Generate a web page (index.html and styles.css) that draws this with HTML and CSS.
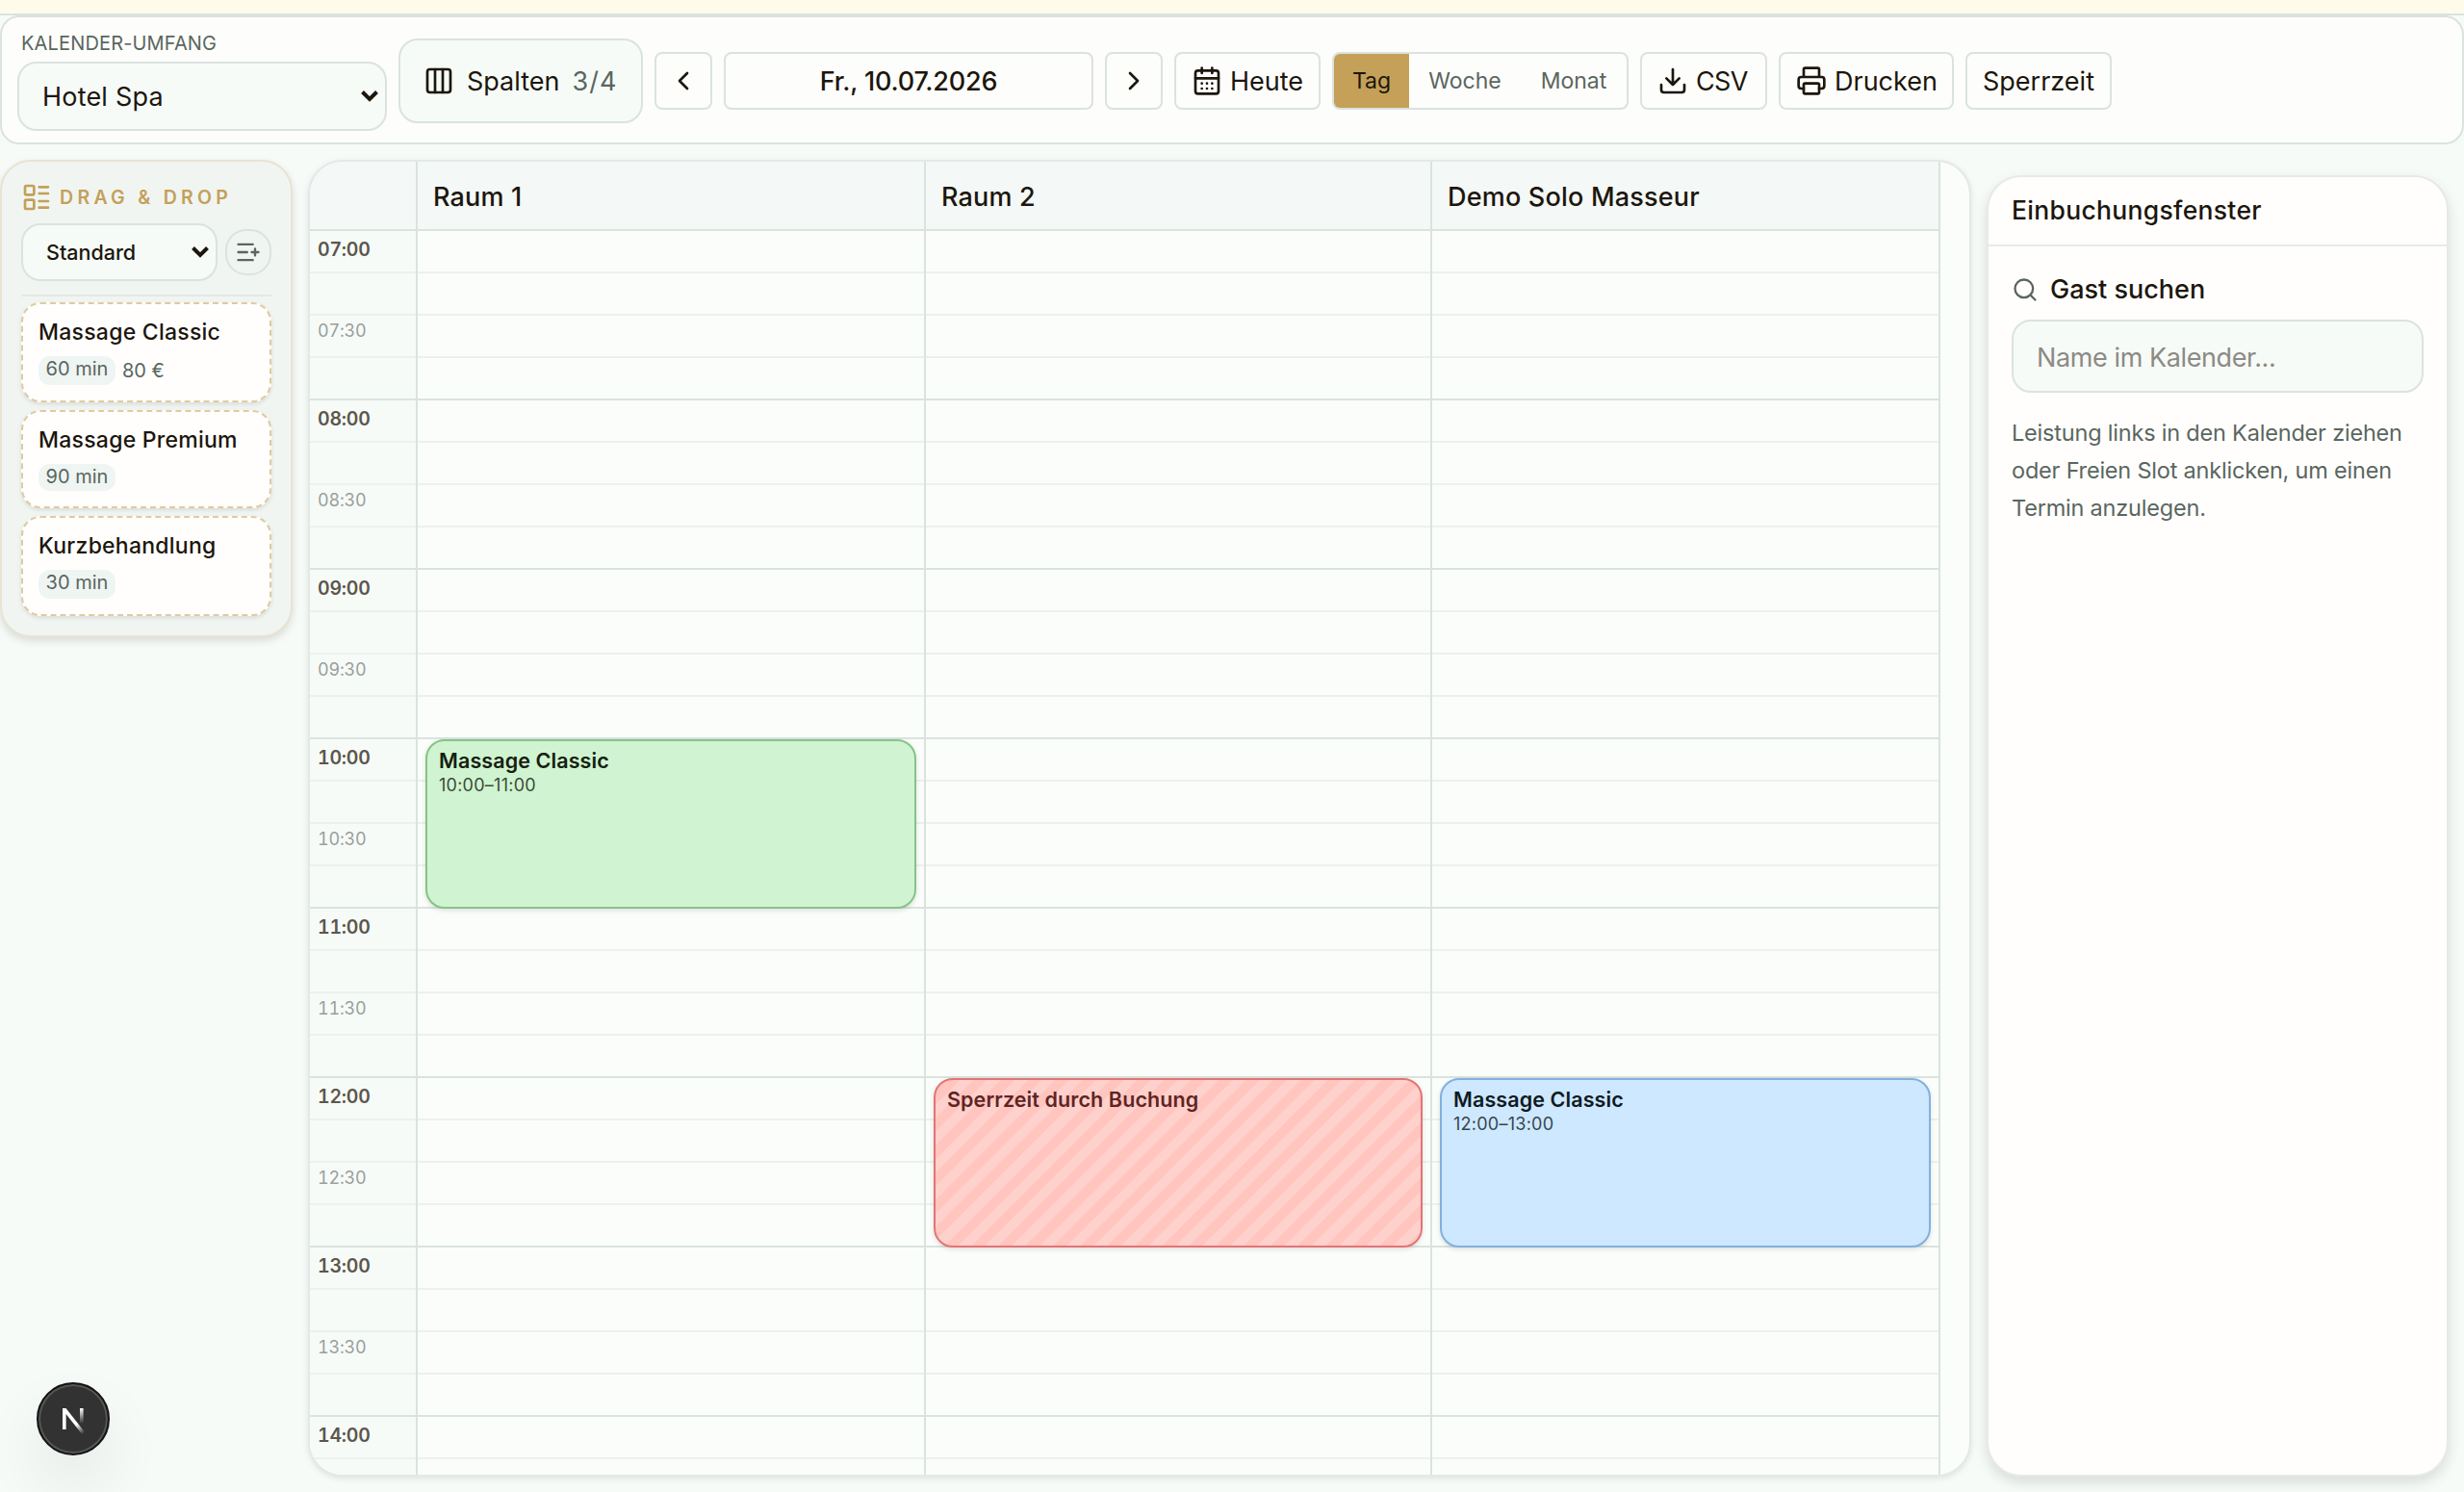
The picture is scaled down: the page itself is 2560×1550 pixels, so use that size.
FILE: index.html
```html
<!DOCTYPE html>
<html lang="de">
<head>
<meta charset="UTF-8">
<meta name="viewport" content="width=device-width, initial-scale=1.0">
<title>Spa Kalender</title>
<link rel="stylesheet" href="styles.css">
</head>
<body>
<div class="notice"></div>

<header class="toolbar">
    <div class="scope">
        <span class="scope-label">Kalender-Umfang</span>
        <div class="select scope-select">
            <span>Hotel Spa</span>
            <svg class="chevron" width="20" height="14" viewBox="0 0 20 14"><path d="M2.5 2.5 10 10l7.5-7.5"/></svg>
        </div>
    </div>
    <button class="columns-btn">
        <svg class="icon" width="32" height="32" viewBox="0 0 24 24"><rect x="3" y="3" width="18" height="18" rx="2"/><path d="M9 3v18M15 3v18"/></svg>
        <span class="columns-label">Spalten</span>
        <span class="columns-count">3/4</span>
    </button>
    <button class="btn btn-arrow"><svg class="icon" width="32" height="32" viewBox="0 0 24 24"><path d="m15 18-6-6 6-6"/></svg></button>
    <div class="btn date">Fr., 10.07.2026</div>
    <button class="btn btn-arrow"><svg class="icon" width="32" height="32" viewBox="0 0 24 24"><path d="m9 18 6-6-6-6"/></svg></button>
    <button class="btn btn-today">
        <svg class="icon" width="32" height="32" viewBox="0 0 24 24"><path d="M8 2v4M16 2v4M3 10h18M8 14h.01M12 14h.01M16 14h.01M8 18h.01M12 18h.01M16 18h.01"/><rect x="3" y="4" width="18" height="18" rx="2"/></svg>
        <span>Heute</span>
    </button>
    <div class="views">
        <button class="view active">Tag</button>
        <button class="view view-week">Woche</button>
        <button class="view view-month">Monat</button>
    </div>
    <button class="btn btn-csv">
        <svg class="icon" width="32" height="32" viewBox="0 0 24 24"><path d="M21 15v4a2 2 0 0 1-2 2H5a2 2 0 0 1-2-2v-4M7 10l5 5 5-5M12 15V3"/></svg>
        <span>CSV</span>
    </button>
    <button class="btn btn-print">
        <svg class="icon" width="32" height="32" viewBox="0 0 24 24"><path d="M6 18H4a2 2 0 0 1-2-2v-5a2 2 0 0 1 2-2h16a2 2 0 0 1 2 2v5a2 2 0 0 1-2 2h-2M6 9V3a1 1 0 0 1 1-1h10a1 1 0 0 1 1 1v6"/><rect x="6" y="14" width="12" height="8" rx="1"/></svg>
        <span>Drucken</span>
    </button>
    <button class="btn btn-block">Sperrzeit</button>
</header>

<main class="layout">
    <aside class="services">
        <div class="services-title">
            <svg class="icon" width="32" height="32" viewBox="0 0 24 24"><rect x="3" y="3" width="7" height="7" rx="1"/><rect x="3" y="14" width="7" height="7" rx="1"/><path d="M14 4h7M14 9h7M14 15h7M14 20h7"/></svg>
            <span>DRAG &amp; DROP</span>
        </div>
        <div class="services-filter">
            <div class="select list-select">
                <span>Standard</span>
                <svg class="chevron" width="20" height="14" viewBox="0 0 20 14"><path d="M2.5 2.5 10 10l7.5-7.5"/></svg>
            </div>
            <button class="round-btn"><svg class="icon" width="28" height="28" viewBox="0 0 24 24"><path d="M16 5H3M11 12H3M16 19H3M18 9v6M21 12h-6"/></svg></button>
        </div>
        <div class="service-list">
            <div class="service">
                <span class="service-name">Massage Classic</span>
                <div class="service-meta"><span class="pill">60 min</span><span class="price">80 €</span></div>
            </div>
            <div class="service short">
                <span class="service-name">Massage Premium</span>
                <div class="service-meta"><span class="pill">90 min</span></div>
            </div>
            <div class="service">
                <span class="service-name">Kurzbehandlung</span>
                <div class="service-meta"><span class="pill">30 min</span></div>
            </div>
        </div>
    </aside>

    <section class="calendar">
        <div class="cal-head">
            <div class="cal-corner"></div>
            <div class="cal-name">Raum 1</div>
            <div class="cal-name">Raum 2</div>
            <div class="cal-name">Demo Solo Masseur</div>
        </div>
        <div class="cal-body">
            <div class="times">
                <span class="hour">07:00</span><span class="half">07:30</span>
                <span class="hour">08:00</span><span class="half">08:30</span>
                <span class="hour">09:00</span><span class="half">09:30</span>
                <span class="hour">10:00</span><span class="half">10:30</span>
                <span class="hour">11:00</span><span class="half">11:30</span>
                <span class="hour">12:00</span><span class="half">12:30</span>
                <span class="hour">13:00</span><span class="half">13:30</span>
                <span class="hour">14:00</span>
            </div>
            <!-- one grid row per 15 minutes, starting at 07:00 -->
            <div class="day-col">
                <div class="event green" style="grid-row: 13 / span 4">
                    <span class="event-title">Massage Classic</span>
                    <span class="event-time">10:00–11:00</span>
                </div>
            </div>
            <div class="day-col">
                <div class="event blocked" style="grid-row: 21 / span 4">
                    <span class="event-title">Sperrzeit durch Buchung</span>
                </div>
            </div>
            <div class="day-col">
                <div class="event blue" style="grid-row: 21 / span 4">
                    <span class="event-title">Massage Classic</span>
                    <span class="event-time">12:00–13:00</span>
                </div>
            </div>
        </div>
    </section>

    <aside class="booking">
        <h2 class="booking-title">Einbuchungsfenster</h2>
        <div class="booking-body">
            <div class="search-label">
                <svg class="icon" width="28" height="28" viewBox="0 0 24 24"><circle cx="11" cy="11" r="8"/><path d="m21 21-4.3-4.3"/></svg>
                <span>Gast suchen</span>
            </div>
            <div class="search-input">Name im Kalender...</div>
            <p class="hint">Leistung links in den Kalender ziehen<br>oder Freien Slot anklicken, um einen<br>Termin anzulegen.</p>
        </div>
    </aside>
</main>

<div class="dev-badge">
    <svg width="40" height="40" viewBox="0 0 40 40">
        <defs>
            <linearGradient id="diag" x1="20" y1="22" x2="31" y2="35" gradientUnits="userSpaceOnUse"><stop offset=".3" stop-color="#fff"/><stop offset="1" stop-color="#fff" stop-opacity="0"/></linearGradient>
            <linearGradient id="stem" x1="29" y1="9" x2="29" y2="25" gradientUnits="userSpaceOnUse"><stop stop-color="#fff"/><stop offset="1" stop-color="#fff" stop-opacity="0"/></linearGradient>
        </defs>
        <path d="M9 31V9h3.5L33 35l-3 2L12.6 15v16z" fill="url(#diag)"/>
        <path d="M28.8 9v16" stroke="url(#stem)" stroke-width="3.6"/>
    </svg>
</div>
</body>
</html>
```
FILE: styles.css
```css
* {
    box-sizing: border-box;
}
body {
    font-family: Inter, "Liberation Sans", sans-serif;
    margin: 0;
    height: 1550px;
    overflow: hidden;
    background-color: #f6fbf8;
    color: #1c160d;
    font-size: 27px;
    white-space: nowrap;
}
button {
    font: inherit;
    color: inherit;
    margin: 0;
    padding: 0;
}
.icon {
    fill: none;
    stroke: currentColor;
    stroke-width: 2;
    stroke-linecap: round;
    stroke-linejoin: round;
    flex: none;
}
.chevron {
    fill: none;
    stroke: #1c160d;
    stroke-width: 4;
}
.notice {
    height: 16px;
    background-color: #fffbeb;
    border-bottom: 2px solid #dae3df;
}

/* Toolbar */
.toolbar {
    display: flex;
    align-items: flex-start;
    height: 134px;
    padding: 10px 16px;
    gap: 12px;
    border: 2px solid #dae3df;
    border-radius: 20px;
    background-color: #fdfdfb;
}
.scope {
    width: 384px;
}
.scope-label {
    display: block;
    height: 36px;
    padding: 5px 0 0 4px;
    font-size: 20px;
    line-height: 24px;
    letter-spacing: 0.15px;
    text-transform: uppercase;
    color: #5a665f;
}
.select {
    display: flex;
    align-items: center;
    justify-content: space-between;
    border: 2px solid #dae3df;
    border-radius: 20px;
    background-color: #f6fbf8;
}
.scope-select {
    height: 72px;
    padding: 0 6px 0 24px;
    letter-spacing: 0.2px;
}
.columns-btn {
    display: flex;
    align-items: center;
    width: 254px;
    height: 88px;
    margin-top: 12px;
    padding-left: 24px;
    border: 2px solid #dae3df;
    border-radius: 20px;
    background-color: #f6fbf8;
}
.columns-label {
    margin: 0 13px;
}
.columns-count {
    color: #5a665f;
    letter-spacing: 1px;
}
.btn {
    display: flex;
    align-items: center;
    height: 60px;
    margin-top: 26px;
    border: 2px solid #dae3df;
    border-radius: 8px;
    background-color: #fdfdfb;
}
.btn-arrow {
    width: 60px;
    justify-content: center;
}
.date {
    width: 384px;
    justify-content: center;
    font-weight: 500;
    letter-spacing: -0.2px;
}
.btn-today {
    width: 152px;
    padding-left: 16px;
    gap: 8px;
}
.btn-csv {
    width: 132px;
    padding-left: 16px;
    gap: 8px;
    letter-spacing: -0.6px;
}
.btn-print {
    width: 182px;
    padding-left: 16px;
    gap: 8px;
}
.btn-block {
    width: 152px;
    justify-content: center;
}
.views {
    display: flex;
    width: 308px;
    height: 60px;
    margin-top: 26px;
    border: 2px solid #dae3df;
    border-radius: 8px;
    overflow: hidden;
    font-size: 23px;
    color: #5a665f;
}
.view {
    width: 78px;
    border: none;
    background: none;
}
.view.active {
    background-color: #c4a058;
    color: #1c160d;
}
.view-week {
    width: 116px;
}
.view-month {
    width: 110px;
}

.layout {
    display: flex;
    align-items: flex-start;
    padding-top: 16px;
    gap: 16px;
}

/* Services */
.services {
    width: 304px;
    height: 496px;
    padding: 20px;
    border: 2px solid #e9e3d1;
    border-radius: 32px;
    background-color: #f1f5f2;
    box-shadow: 0 4px 8px rgba(0, 0, 0, 0.12);
}
.services-title {
    display: flex;
    align-items: center;
    height: 34px;
    gap: 8px;
    font-size: 19.5px;
    font-weight: 600;
    letter-spacing: 4.3px;
    color: #c4a058;
}
.services-filter {
    display: flex;
    align-items: center;
    gap: 8px;
    height: 86px;
    padding: 10px 0 14px;
    border-bottom: 2px solid #e3e9e5;
    margin-bottom: 6px;
}
.list-select {
    width: 204px;
    height: 60px;
    padding: 0 6px 0 24px;
    font-size: 21.5px;
    font-weight: 500;
}
.round-btn {
    display: flex;
    align-items: center;
    justify-content: center;
    width: 48px;
    height: 48px;
    border: 2px solid #dae3df;
    border-radius: 22px;
    background: none;
    color: #5a665f;
}
.service-list {
    display: flex;
    flex-direction: column;
    gap: 8px;
}
.service {
    height: 104px;
    padding: 14px 16px;
    border: 2px dashed #dfcba0;
    border-radius: 20px;
    background-color: #fffefd;
    box-shadow: 0 2px 4px rgba(0, 0, 0, 0.1);
}
.service.short {
    height: 102px;
}
.service-name {
    display: block;
    font-size: 23px;
    font-weight: 500;
    line-height: 30px;
    letter-spacing: 0.25px;
}
.service-meta {
    display: flex;
    gap: 7px;
    margin-top: 10px;
    font-size: 20px;
    line-height: 28px;
    color: #5a665f;
}
.pill {
    width: 80px;
    height: 30px;
    line-height: 27px;
    text-align: center;
    border-radius: 12px;
    background-color: #eef5f2;
}
.short .pill {
    height: 28px;
}
.price {
    line-height: 31px;
}

/* Calendar */
.calendar {
    width: 1728px;
    height: 1368px;
    border: 2px solid #e3e9e6;
    border-radius: 36px;
    overflow: hidden;
    background-color: #fbfdfa;
    box-shadow: 0 2px 6px rgba(0, 0, 0, 0.1);
}
.cal-head, .cal-body {
    display: grid;
    grid-template-columns: 112px 528px 526px 528px;
    width: 1694px;
}
.cal-head {
    height: 72px;
    border-bottom: 2px solid #dae3df;
    background-color: #f4f8f6;
}
.cal-corner, .cal-name {
    border-right: 2px solid #dae3df;
}
.cal-name {
    padding-left: 16px;
    line-height: 73px;
    font-weight: 500;
    letter-spacing: 0.2px;
}
.cal-body {
    height: 1292px;
}
.times, .day-col {
    display: grid;
    align-content: start;
    border-right: 2px solid #dae3df;
    background-image: repeating-linear-gradient(to bottom,
        transparent 0 42px, #ecf0ee 42px 44px,
        transparent 44px 86px, #ecf0ee 86px 88px,
        transparent 88px 130px, #ecf0ee 130px 132px,
        transparent 132px 174px, #dae3df 174px 176px);
}
.times {
    grid-auto-rows: 88px;
    padding-left: 8px;
    background-color: #f6fbf8;
    font-variant-numeric: tabular-nums;
}
.day-col {
    grid-template-rows: repeat(29, 44px);
    padding: 0 8px;
}
.hour {
    padding-top: 7px;
    font-size: 19.5px;
    line-height: 24px;
    font-weight: 600;
    letter-spacing: -0.2px;
    color: #5c564c;
}
.half {
    padding-top: 4px;
    font-size: 18px;
    line-height: 24px;
    letter-spacing: -0.2px;
    color: #9a9f9b;
}
.event {
    display: flex;
    flex-direction: column;
    padding: 6px 12px;
    border: 2px solid;
    border-radius: 20px;
    box-shadow: 0 2px 5px rgba(0, 0, 0, 0.12);
}
.event-title {
    font-size: 21.5px;
    font-weight: 600;
    line-height: 28px;
    letter-spacing: 0.1px;
}
.event-time {
    font-size: 18px;
    line-height: 24px;
    letter-spacing: 0.25px;
    opacity: 0.8;
}
.green {
    background-color: #d0f4d1;
    border-color: #86c38a;
    color: #15200f;
}
.blue {
    background-color: #cde8ff;
    border-color: #82b0df;
    color: #101a22;
}
.blocked {
    background-image: repeating-linear-gradient(-45deg, #ffc5be 0 10px, #ffd1cc 10px 20px);
    border-color: #e37474;
    color: #5f2424;
}

/* Booking panel */
.booking {
    width: 480px;
    height: 1352px;
    margin-top: 16px;
    border: 2px solid #e6eae7;
    border-radius: 36px;
    background-color: #fffefd;
    box-shadow: 0 6px 14px rgba(0, 0, 0, 0.12);
}
.booking-title {
    height: 72px;
    margin: 0;
    padding-left: 24px;
    border-bottom: 2px solid #e6ece9;
    font-size: 26.5px;
    font-weight: 500;
    line-height: 69px;
    letter-spacing: 0.3px;
}
.booking-body {
    padding: 26px 24px;
}
.search-label {
    display: flex;
    align-items: center;
    height: 36px;
    gap: 12px;
    font-weight: 500;
}
.search-label .icon {
    color: #5a665f;
    margin-top: 2px;
}
.search-input {
    height: 76px;
    margin-top: 14px;
    padding-left: 24px;
    border: 2px solid #dae3df;
    border-radius: 20px;
    background-color: #f6fbf8;
    line-height: 76px;
    letter-spacing: -0.4px;
    color: #8d8a84;
}
.hint {
    margin: 22px 0 0;
    font-size: 23.5px;
    line-height: 39px;
    letter-spacing: -0.2px;
    color: #5a665f;
}

/* Floating badge, bottom left */
.dev-badge {
    position: absolute;
    left: 38px;
    top: 1436px;
    display: flex;
    align-items: center;
    justify-content: center;
    width: 76px;
    height: 76px;
    border: 2px solid #141414;
    border-radius: 50%;
    background-color: #323232;
    box-shadow: inset 0 0 0 2px #575757, 0 32px 64px rgba(0, 0, 0, 0.08);
}
```
